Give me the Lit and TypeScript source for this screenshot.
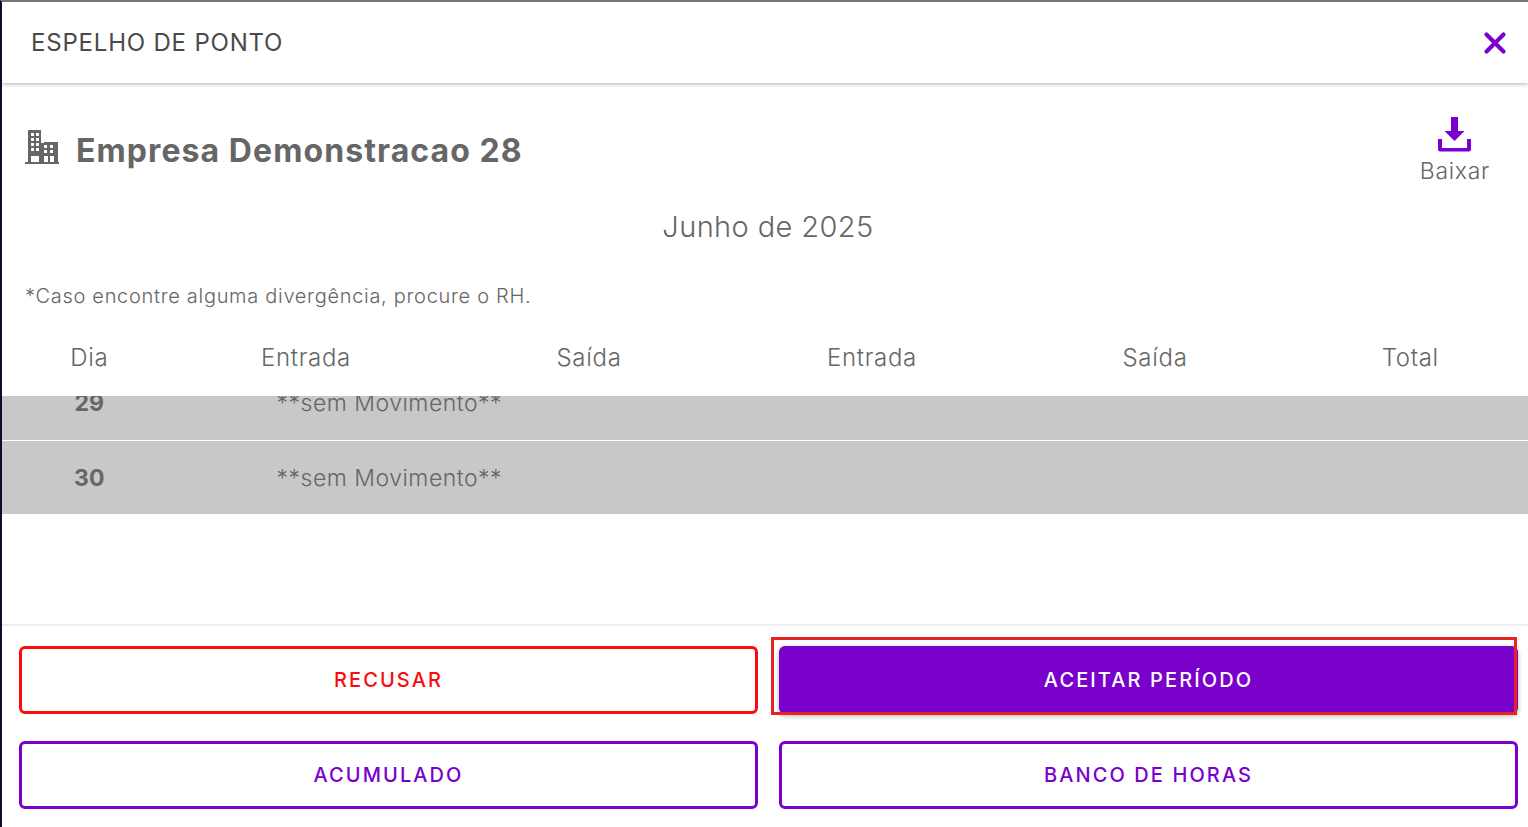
import { LitElement, html, css, svg } from 'lit';
import { customElement, property } from 'lit/decorators.js';

const HEADERS = ['Dia', 'Entrada', 'Saída', 'Entrada', 'Saída', 'Total'];
const ROWS = [
  { day: '29', note: '**sem Movimento**' },
  { day: '30', note: '**sem Movimento**' },
];

const buildingIcon = svg`
  <path fill-rule="evenodd" d="M3 0h13v13h3v-1h14v20h1v2H0v-2h3V0zM6 3v3h3V3H6zm5 0v3h3V3h-3zM6 8v3h3V8H6zm5 0v3h3V8h-3zM6 13v3h3v-3H6zm5 0v3h3v-3h-3zM6 18v3h3v-3H6zm5 0v3h3v-3h-3zm8-3v3h3v-3h-3zm6 0v3h3v-3h-3zm-6 5v3h3v-3h-3zm6 0v3h3v-3h-3zM6 26v6h8v-6H6zm13 0v6h4v-6h-4zm6 0v6h4v-6h-4z" />
`;

const downloadIcon = svg`
  <path d="M13 0h7v14h6.500L16.500 24 6.500 14H13z" />
  <path d="M0 22h4v9h25v-9h4v10.500a2 2 0 0 1-2 2H2a2 2 0 0 1-2-2z" />
`;

@customElement('action-button')
export class ActionButton extends LitElement {
  static styles = css`
    :host {
      display: block;
    }

    button {
      display: block;
      width: 100%;
      height: 68px;
      box-sizing: border-box;
      border: 3px solid #7a00cc;
      border-radius: 6px;
      background: #fff;
      color: #7a00cc;
      font-family: Inter, 'Noto Sans', sans-serif;
      font-size: 20px;
      font-weight: 500;
      letter-spacing: 2.100px;
      text-transform: uppercase;
      padding: 0;
    }

    .danger {
      border-color: #f70d0d;
      color: #f70d0d;
    }

    .primary {
      background: #7a00cc;
      color: #fff;
      box-shadow: 0 2px 5px rgba(0, 0, 0, 0.3);
    }
  `;

  @property({ type: String }) variant = 'outline';

  render() {
    return html`<button class=${this.variant}><slot></slot></button>`;
  }
}

@customElement('app-root')
export class AppRoot extends LitElement {
  static styles = css`
    :host {
      display: flex;
      flex-direction: column;
      height: 100vh;
      box-sizing: border-box;
      border-top: 2px solid #777;
      border-left: 2px solid #0b0b2b;
      background: #fff;
      color: #666;
      font-family: Inter, 'Noto Sans', sans-serif;
      overflow: hidden;
    }

    .topbar {
      flex: none;
      display: flex;
      align-items: center;
      justify-content: space-between;
      height: 81px;
      padding: 0 21px 0 29px;
      box-shadow: 0 1px 4px rgba(0, 0, 0, 0.3);
    }

    .topbar h1 {
      margin: 0;
      color: #4a4a4a;
      font-size: 24px;
      font-weight: 400;
      letter-spacing: 0.800px;
    }

    .close {
      display: block;
      width: 24px;
      height: 24px;
    }

    .company {
      display: flex;
      justify-content: space-between;
      height: 108px;
      padding: 34px 38px 0 23px;
      box-sizing: border-box;
    }

    .company-name {
      display: flex;
      align-items: center;
      gap: 17px;
      height: 66px;
    }

    .company-name svg {
      width: 34px;
      height: 34px;
      margin-bottom: 6px;
      fill: #666;
    }

    .company-name h2 {
      margin: 0;
      font-size: 32px;
      font-weight: 700;
      letter-spacing: 1.080px;
    }

    .download {
      display: flex;
      flex-direction: column;
      align-items: center;
      gap: 5px;
      font-size: 23px;
      font-weight: 300;
      letter-spacing: 0.700px;
      color: #666;
    }

    .download svg {
      width: 33px;
      height: 35px;
      fill: #7a00cc;
    }

    .period {
      margin: 18px 0 0;
      padding-left: 6px;
      font-size: 29px;
      font-weight: 300;
      letter-spacing: 0.400px;
      text-align: center;
      line-height: 36px;
    }

    .hint {
      margin: 39px 0 0;
      padding-left: 23px;
      font-size: 20px;
      font-weight: 300;
      letter-spacing: 0.700px;
      line-height: 24px;
    }

    .cols {
      display: grid;
      grid-template-columns: 162.500px repeat(4, 283px) 1fr;
      align-items: center;
    }

    .table-head {
      height: 77px;
      margin-top: 11px;
      font-size: 24px;
      font-weight: 300;
      letter-spacing: 0.700px;
      text-align: center;
      padding-right: 4px;
    }

    .table-head span:first-child {
      padding-left: 12px;
    }

    .table-body {
      display: flex;
      flex-direction: column;
      justify-content: flex-end;
      height: 118px;
      overflow: hidden;
    }

    .row {
      flex: none;
      height: 73px;
      background: #c8c8c8;
      font-size: 23px;
      font-weight: 300;
      letter-spacing: 0.500px;
    }

    .row:first-child {
      height: 74px;
    }

    .row + .row {
      margin-top: 1px;
    }

    .row .day {
      font-weight: 700;
      letter-spacing: 0;
      text-align: center;
      padding-left: 12px;
    }

    .row .note {
      grid-column: 2 / span 2;
      padding-left: 112px;
      white-space: nowrap;
    }

    .footer {
      margin-top: auto;
      display: grid;
      grid-template-columns: 1fr 1fr;
      gap: 27px 21px;
      padding: 20px 10px 18px 17px;
      border-top: 2px solid #eee;
    }

    .marked {
      position: relative;
    }

    .marker {
      position: absolute;
      left: -8px;
      top: -9px;
      right: 1px;
      bottom: -1px;
      border: 3px solid #e62222;
      pointer-events: none;
    }
  `;

  render() {
    return html`
      <header class="topbar">
        <h1>ESPELHO DE PONTO</h1>
        <svg class="close" viewBox="0 0 24 24" aria-hidden="true">
          <path d="M3.500 3.500l17 17M20.500 3.500l-17 17" stroke="#7a00cc" stroke-width="4.200" stroke-linecap="round" />
        </svg>
      </header>

      <section class="company">
        <div class="company-name">
          <svg viewBox="0 0 34 34" aria-hidden="true">${buildingIcon}</svg>
          <h2>Empresa Demonstracao 28</h2>
        </div>
        <div class="download">
          <svg viewBox="0 0 33 35" aria-hidden="true">${downloadIcon}</svg>
          <span>Baixar</span>
        </div>
      </section>

      <p class="period">Junho de 2025</p>
      <p class="hint">*Caso encontre alguma divergência, procure o RH.</p>

      <div class="cols table-head">
        ${HEADERS.map((h) => html`<span>${h}</span>`)}
      </div>
      <div class="table-body">
        ${ROWS.map(
          (r) => html`
            <div class="cols row">
              <span class="day">${r.day}</span>
              <span class="note">${r.note}</span>
            </div>
          `,
        )}
      </div>

      <footer class="footer">
        <action-button variant="danger">Recusar</action-button>
        <div class="marked">
          <action-button variant="primary">Aceitar período</action-button>
          <div class="marker"></div>
        </div>
        <action-button>Acumulado</action-button>
        <action-button>Banco de horas</action-button>
      </footer>
    `;
  }
}
